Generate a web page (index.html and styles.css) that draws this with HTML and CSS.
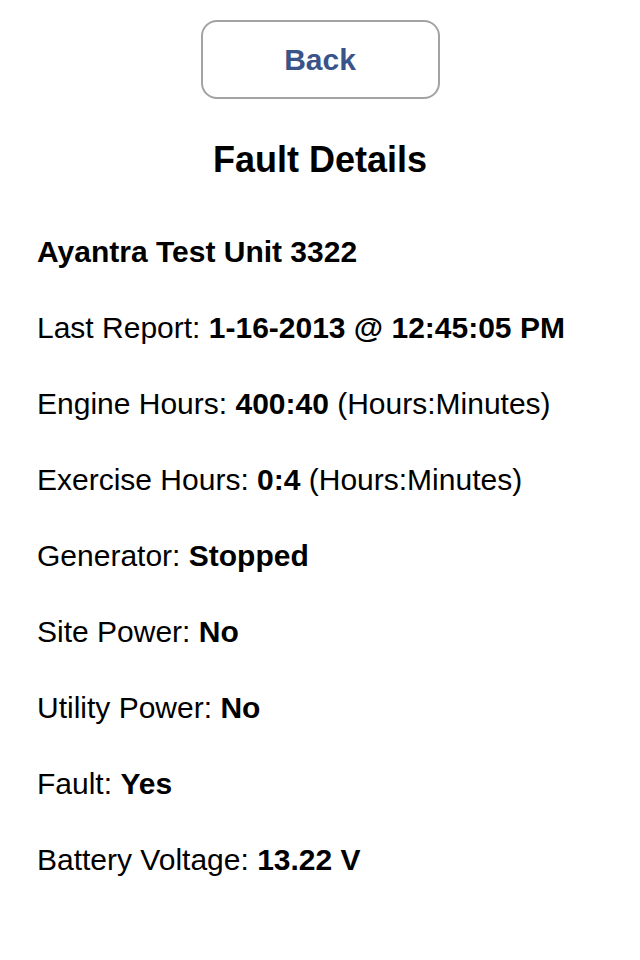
FILE: index.html
```html
<!DOCTYPE html>
<html lang="en">
<head>
    <meta charset="UTF-8">
    <meta name="viewport" content="width=device-width, initial-scale=1.0">
    <title>Fault Details</title>
    <link rel="stylesheet" href="styles.css">
</head>
<body>
    <!-- Back Button -->
    <div class="top-bar">
        <button class="back-btn">Back</button>
    </div>

    <h1>Fault Details</h1>

    <!-- Unit Details -->
    <div class="details">
        <p class="unit-name">Ayantra Test Unit 3322</p>
        <p>Last Report: <b>1-16-2013 @ 12:45:05 PM</b></p>
        <p>Engine Hours: <b>400:40</b> (Hours:Minutes)</p>
        <p>Exercise Hours: <b>0:4</b> (Hours:Minutes)</p>
        <p>Generator: <b>Stopped</b></p>
        <p>Site Power: <b>No</b></p>
        <p>Utility Power: <b>No</b></p>
        <p>Fault: <b>Yes</b></p>
        <p>Battery Voltage: <b>13.22 V</b></p>
    </div>
</body>
</html>
```

FILE: styles.css
```css
body {
    font-family: 'Liberation Sans', Arial, sans-serif;
    background-color: #ffffff;
    color: #000000;
    margin: 0;
    padding: 20px 0 0 0;
}
.top-bar {
    display: flex;
    justify-content: center;
}
.back-btn {
    width: 239px;
    height: 79px;
    font-family: 'Liberation Sans', Arial, sans-serif;
    font-size: 30px;
    font-weight: bold;
    color: #3a5489;
    background-color: #ffffff;
    border: 2px solid #a3a3a3;
    border-radius: 16px;
    padding: 0;
}
h1 {
    text-align: center;
    font-size: 36px;
    font-weight: bold;
    margin: 41px 0 0 0;
    line-height: 40px;
}
.details {
    display: flex;
    flex-direction: column;
    gap: 42px;
    padding: 55px 0 0 37px;
}
.details p {
    margin: 0;
    font-size: 30px;
    line-height: 34px;
}
.unit-name {
    font-weight: bold;
}
```
